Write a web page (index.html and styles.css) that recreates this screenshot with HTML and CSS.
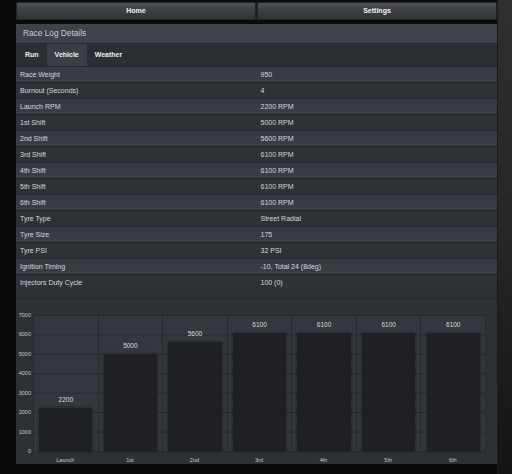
FILE: index.html
```html
<!DOCTYPE html>
<html lang="en">
<head>
    <meta charset="UTF-8">
    <meta name="viewport" content="width=device-width, initial-scale=1.0">
    <title>Race Log Details</title>
    <link rel="stylesheet" href="styles.css">
</head>
<body>
    <div class="page">
        <div class="main">
            <div class="nav">
                <a class="nav-button">Home</a>
                <a class="nav-button">Settings</a>
            </div>

            <div class="panel">
                <div class="panel-head">Race Log Details</div>
                <div class="tabs">
                    <span class="tab">Run</span>
                    <span class="tab active">Vehicle</span>
                    <span class="tab">Weather</span>
                </div>

                <table class="log">
                    <tr><td>Race Weight</td><td>950</td></tr>
                    <tr><td>Burnout (Seconds)</td><td>4</td></tr>
                    <tr><td>Launch RPM</td><td>2200 RPM</td></tr>
                    <tr><td>1st Shift</td><td>5000 RPM</td></tr>
                    <tr><td>2nd Shift</td><td>5600 RPM</td></tr>
                    <tr><td>3rd Shift</td><td>6100 RPM</td></tr>
                    <tr><td>4th Shift</td><td>6100 RPM</td></tr>
                    <tr><td>5th Shift</td><td>6100 RPM</td></tr>
                    <tr><td>6th Shift</td><td>6100 RPM</td></tr>
                    <tr><td>Tyre Type</td><td>Street Radial</td></tr>
                    <tr><td>Tyre Size</td><td>175</td></tr>
                    <tr><td>Tyre PSI</td><td>32 PSI</td></tr>
                    <tr><td>Ignition Timing</td><td>-10, Total 24 (8deg)</td></tr>
                    <tr><td>Injectors Duty Cycle</td><td>100 (0)</td></tr>
                </table>

                <div class="chart">
                    <div class="chart-body">
                        <div class="y-axis">
                            <span>7000</span><span>6000</span><span>5000</span><span>4000</span>
                            <span>3000</span><span>2000</span><span>1000</span><span>0</span>
                        </div>
                        <div class="plot">
                            <div class="col"><span class="val">2200</span><div class="bar" style="height: 42.7px"></div></div>
                            <div class="col"><span class="val">5000</span><div class="bar" style="height: 97.1px"></div></div>
                            <div class="col"><span class="val">5600</span><div class="bar" style="height: 108.8px"></div></div>
                            <div class="col"><span class="val">6100</span><div class="bar" style="height: 118.5px"></div></div>
                            <div class="col"><span class="val">6100</span><div class="bar" style="height: 118.5px"></div></div>
                            <div class="col"><span class="val">6100</span><div class="bar" style="height: 118.5px"></div></div>
                            <div class="col"><span class="val">6100</span><div class="bar" style="height: 118.5px"></div></div>
                        </div>
                    </div>
                    <div class="x-axis">
                        <span>Launch</span><span>1st</span><span>2nd</span><span>3rd</span>
                        <span>4th</span><span>5th</span><span>6th</span>
                    </div>
                </div>
            </div>
        </div>
        <div class="side"></div>
    </div>
</body>
</html>
```

FILE: styles.css
```css
body {
    margin: 0;
    background: #0a0a0a;
    font-family: 'Liberation Sans', Arial, sans-serif;
    color: #d4d7db;
    font-size: 7px;
}
.page {
    display: flex;
    height: 474px;
    overflow: hidden;
}
.main {
    width: 481px;
    margin-left: 16px;
    padding-top: 2px;
}
.side {
    flex: 1;
    background: linear-gradient(to bottom, #2f2f2f, #262626 50%, #141414);
    border-left: 1px solid #1b1b1b;
}

/* top navigation */
.nav {
    display: flex;
    gap: 1px;
    height: 18px;
    background: #1c1d1f;
}
.nav-button {
    flex: 1;
    text-align: center;
    font-weight: bold;
    color: #f2f2f2;
    background: linear-gradient(to bottom, #4d5055, #3a3d41 55%, #303337);
    border: 1px solid #232427;
    box-sizing: border-box;
    line-height: 16px;
}

/* panel */
.panel {
    margin-top: 4px;
    background: #2d3035;
    height: 440px;
}
.panel-head {
    height: 19px;
    line-height: 19px;
    padding-left: 7px;
    font-size: 8.3px;
    color: #c9cdd2;
    background: #3e424a;
    border-bottom: 1px solid #25282c;
}
.tabs {
    display: flex;
    height: 22px;
    padding-left: 1px;
    background: #2b2e33;
}
.tab {
    padding: 0 8px;
    line-height: 22px;
    font-weight: bold;
    color: #eceef0;
}
.tab.active {
    background: #3b3e44;
}

/* details table */
.log {
    width: 100%;
    border-collapse: collapse;
}
.log td {
    height: 15px;
    padding: 0 0 0 4px;
    border-top: 1px solid #24272b;
    color: #d6d9dc;
    white-space: nowrap;
}
.log td:first-child {
    width: 50%;
}
.log tr:nth-child(odd) td {
    background: #393c42;
}
.log tr:nth-child(even) td {
    background: #2e3136;
}

/* chart */
.chart {
    margin-top: 8px;
    border-top: 1px solid #24272b;
    padding-top: 16px;
}
.chart-body {
    display: flex;
}
.y-axis {
    width: 15px;
    height: 144px;
    margin-top: -4px;
    padding-right: 2px;
    display: flex;
    flex-direction: column;
    justify-content: space-between;
    align-items: flex-end;
    font-size: 5.5px;
    line-height: 8px;
    color: #c8cacd;
}
.plot {
    width: 452px;
    height: 136px;
    display: flex;
    background-color: #34373d;
    background-image: linear-gradient(to bottom, #25282c 0, #25282c 1px, transparent 1px);
    background-size: 100% 19.43px;
    border-right: 1px solid #25282c;
    border-bottom: 1px solid #25282c;
}
.col {
    flex: 1;
    display: flex;
    flex-direction: column;
    justify-content: flex-end;
    align-items: center;
    border-left: 1px solid #25282c;
}
.val {
    font-size: 6.5px;
    line-height: 8px;
    margin-bottom: 4px;
    color: #dcdcdc;
}
.bar {
    width: 84%;
    background: #1f2023;
    box-shadow: 0 0 3px rgba(0, 0, 0, 0.45);
}
.x-axis {
    display: flex;
    margin-left: 17px;
    width: 452px;
    height: 13px;
    line-height: 11px;
    font-size: 5.5px;
    color: #c8cacd;
}
.x-axis span {
    flex: 1;
    text-align: center;
}
```
